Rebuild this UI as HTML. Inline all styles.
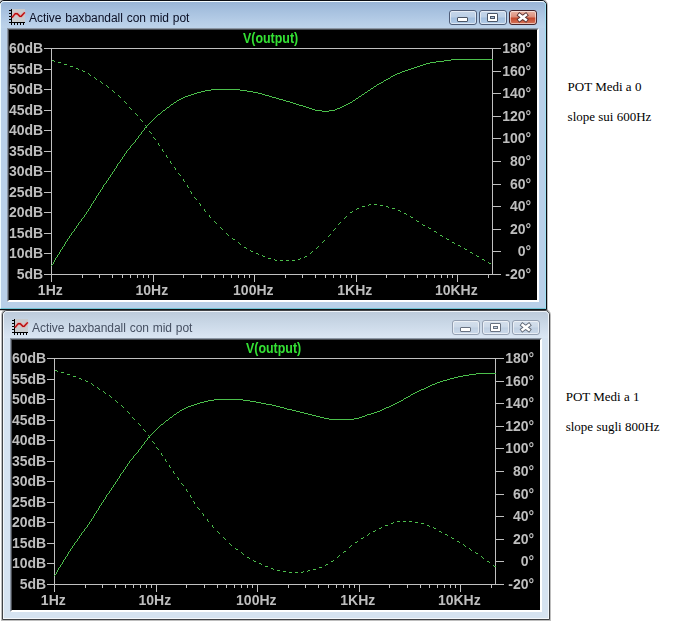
<!DOCTYPE html>
<html><head><meta charset="utf-8"><title>Active baxbandall con mid pot</title>
<style>
html,body{margin:0;padding:0;background:#fff;}
body{width:684px;height:621px;position:relative;overflow:hidden;font-family:"Liberation Serif","Times New Roman",serif;}
.win{position:absolute;width:548px;height:310px;box-sizing:border-box;border:1px solid #000;border-radius:5px 5px 0 0;overflow:hidden;}
.win.act{background:#b9d0e9;border-color:#0a0d12;box-shadow:0 0 0 1px rgba(40,40,40,.28);}
.win.ina{background:#d6e3f1;border-color:#404246;box-shadow:0 0 0 1px rgba(40,40,40,.3);}
.hl{position:absolute;left:0;top:0;right:0;bottom:0;box-sizing:border-box;border:1px solid #fff;border-radius:4px 4px 0 0;z-index:3;pointer-events:none}
.act .hl{border-color:#f4fcff #9fe0f2 #6fc3d4 #eefbff;}
.ina .hl{border-color:#f0f4f9 #f2f6fb #f4f7fb #f2f6fa;}
.cap{position:absolute;left:1px;top:1px;right:1px;height:26px;}
.act .cap{background:linear-gradient(#99b5d6 0,#a7c1df 35%,#b6cde7 75%,#bdd3ea 100%);}
.ina .cap{background:linear-gradient(#bdcbdb 0,#cad8e7 45%,#d6e2f0 85%,#dae6f3 100%);}
.ico{position:absolute;left:9px;top:8px;}
.ttl{will-change:transform;position:absolute;left:29px;top:9px;word-spacing:0.6px;height:16px;line-height:16px;font-family:"Liberation Sans",Arial,sans-serif;font-size:12px;white-space:nowrap;letter-spacing:-0.05px;}
.act .ttl{color:#0a0f24;}
.ina .ttl{color:#465062;}
.btn{position:absolute;top:9px;width:28px;height:15px;box-sizing:border-box;border:1px solid #4f5d78;border-radius:3px;overflow:hidden;}
.btn:before{content:"";position:absolute;left:0;top:0;right:0;bottom:0;border:1px solid rgba(255,255,255,.55);border-radius:2px;}
.bmin{left:449px}.bmax{left:479px}.bcls{left:509px}
.act .bmin,.act .bmax{background:linear-gradient(#c6d6ea 0,#bbcfe6 48%,#a3bfdf 52%,#b2cbe6 100%);}
.ina .btn{border-color:#94a0b2;background:linear-gradient(#d4dfec 0,#ccd9e8 48%,#bfcfe2 52%,#cbd9e9 100%);}
.act .bcls{border-color:#43232b;background:linear-gradient(#e9b5a6 0,#dc8e7b 46%,#c4472b 54%,#d4755c 100%);}
.btn i{position:absolute;box-sizing:border-box;background:#fff;border:1px solid #4b5566;border-radius:1px;}
.bmin i{left:7px;top:6px;width:11px;height:5px;}
.bmax i{left:7px;top:2px;width:11px;height:9px;border-width:1px;box-shadow:inset 0 0 0 2px #fff, inset 0 0 0 3px #4b5566;background:#b0c4dc}
.ina .btn i{border-color:#697281;}
.ina .bmax i{box-shadow:inset 0 0 0 2px #fff, inset 0 0 0 3px #697281;background:#ccd9e8}
.bcls svg{position:absolute;left:0;top:0}
.act .xo{stroke:#5a3232}.ina .xo{stroke:#5f6876}
.edge{position:absolute;left:7px;top:27px;width:528px;height:270px;border-style:solid;border-width:1px;border-color:#8c97a5 #fff #fff #8c97a5;}
.edge:before{content:"";position:absolute;left:0;top:0;right:0;bottom:0;border-style:solid;border-width:1px;border-color:#4a4e55 #fff #fff #4a4e55;}
.edge{padding:1px;}
.plot{display:block;background:#000;position:relative;will-change:transform;}
.note{position:absolute;font-size:13px;line-height:15px;color:#000;white-space:nowrap;}
</style></head><body>
<div class="win act" style="left:-1px;top:0px">
<div class="hl"></div>
<div class="cap"></div>
<svg class="ico" width="17" height="17" viewBox="0 0 17 17"><rect x="3" y="0" width="13" height="13" fill="#c9cbcd"/><path d="M2.5 0V16M0 13.5H16M0 1.5H2M0 4.5H2M0 7.5H2M0 10.5H2M5.5 14V16M8.5 14V16M11.5 14V16M14.5 14V16" stroke="#000" stroke-width="1" fill="none" shape-rendering="crispEdges"/><path d="M3 8.7L6.2 4.7H8.3L10.8 7.3H12.2L15.8 3.4" stroke="#ff7070" stroke-opacity=".45" stroke-width="2.8" fill="none" stroke-linejoin="round"/><path d="M3 8.7L6.2 4.7H8.3L10.8 7.3H12.2L15.8 3.4" stroke="#b80a0a" stroke-width="1.35" fill="none" stroke-linejoin="round"/></svg>
<div class="ttl">Active baxbandall con mid pot</div>
<div class="btn bmin"><i></i></div>
<div class="btn bmax"><i></i></div>
<div class="btn bcls"><svg width="26" height="13" viewBox="0 0 26 13"><path class="xo" d="M9.6 4L15.8 8.7M15.8 4L9.6 8.7" stroke-width="4.3" stroke-linecap="square"/><path d="M9.6 4L15.8 8.7M15.8 4L9.6 8.7" stroke="#fff" stroke-width="2.6" stroke-linecap="square"/></svg></div>
<div class="edge"><svg class="plot" width="528" height="270" viewBox="0 0 528 270">
<g stroke="#c0c0c0" stroke-width="1" fill="none" shape-rendering="crispEdges">
<path d="M34.5 18.5 H491.5 M34.5 244.5 H491.5 M42.5 18.5 V252.0 M483.5 18.5 V244.5"/>
<path d="M34.5 18.5 H42.5 M34.5 39.5 H42.5 M34.5 59.5 H42.5 M34.5 80.5 H42.5 M34.5 100.5 H42.5 M34.5 121.5 H42.5 M34.5 141.5 H42.5 M34.5 162.5 H42.5 M34.5 182.5 H42.5 M34.5 203.5 H42.5 M34.5 223.5 H42.5 M34.5 244.5 H42.5 M483.5 18.5 H491.5 M483.5 41.5 H491.5 M483.5 63.5 H491.5 M483.5 86.5 H491.5 M483.5 108.5 H491.5 M483.5 131.5 H491.5 M483.5 154.5 H491.5 M483.5 176.5 H491.5 M483.5 199.5 H491.5 M483.5 221.5 H491.5 M483.5 244.5 H491.5 M42.5 244.5 V252.0 M73.5 244.5 V248.0 M90.5 244.5 V248.0 M103.5 244.5 V248.0 M113.5 244.5 V248.0 M121.5 244.5 V248.0 M128.5 244.5 V248.0 M134.5 244.5 V248.0 M139.5 244.5 V248.0 M144.5 244.5 V252.0 M174.5 244.5 V248.0 M192.5 244.5 V248.0 M205.5 244.5 V248.0 M214.5 244.5 V248.0 M222.5 244.5 V248.0 M229.5 244.5 V248.0 M235.5 244.5 V248.0 M240.5 244.5 V248.0 M245.5 244.5 V252.0 M276.5 244.5 V248.0 M293.5 244.5 V248.0 M306.5 244.5 V248.0 M316.5 244.5 V248.0 M324.5 244.5 V248.0 M331.5 244.5 V248.0 M337.5 244.5 V248.0 M342.5 244.5 V248.0 M347.5 244.5 V252.0 M377.5 244.5 V248.0 M395.5 244.5 V248.0 M408.5 244.5 V248.0 M417.5 244.5 V248.0 M425.5 244.5 V248.0 M432.5 244.5 V248.0 M438.5 244.5 V248.0 M443.5 244.5 V248.0 M448.5 244.5 V252.0 M479.5 244.5 V248.0"/>
</g>
<g font-family="Liberation Sans, Arial, sans-serif" font-weight="bold" font-size="14px" fill="#bebebe">
<text x="34.1" y="23.0" text-anchor="end">60dB</text>
<text x="34.1" y="44.0" text-anchor="end">55dB</text>
<text x="34.1" y="64.0" text-anchor="end">50dB</text>
<text x="34.1" y="85.0" text-anchor="end">45dB</text>
<text x="34.1" y="105.0" text-anchor="end">40dB</text>
<text x="34.1" y="126.0" text-anchor="end">35dB</text>
<text x="34.1" y="146.0" text-anchor="end">30dB</text>
<text x="34.1" y="167.0" text-anchor="end">25dB</text>
<text x="34.1" y="187.0" text-anchor="end">20dB</text>
<text x="34.1" y="208.0" text-anchor="end">15dB</text>
<text x="34.1" y="228.0" text-anchor="end">10dB</text>
<text x="34.1" y="249.0" text-anchor="end">5dB</text>
<text x="522.1" y="23.0" text-anchor="end">180°</text>
<text x="522.1" y="46.0" text-anchor="end">160°</text>
<text x="522.1" y="68.0" text-anchor="end">140°</text>
<text x="522.1" y="91.0" text-anchor="end">120°</text>
<text x="522.1" y="113.0" text-anchor="end">100°</text>
<text x="522.1" y="136.0" text-anchor="end">80°</text>
<text x="522.1" y="159.0" text-anchor="end">60°</text>
<text x="522.1" y="181.0" text-anchor="end">40°</text>
<text x="522.1" y="204.0" text-anchor="end">20°</text>
<text x="522.1" y="226.0" text-anchor="end">0°</text>
<text x="522.1" y="249.0" text-anchor="end">-20°</text>
<text x="41.3" y="265.0" text-anchor="middle">1Hz</text>
<text x="142.8" y="265.0" text-anchor="middle">10Hz</text>
<text x="244.3" y="265.0" text-anchor="middle">100Hz</text>
<text x="345.8" y="265.0" text-anchor="middle">1KHz</text>
<text x="447.3" y="265.0" text-anchor="middle">10KHz</text>
</g>
<text x="261.6" y="12.600000000000001" text-anchor="middle" font-family="Liberation Sans, Arial, sans-serif" font-weight="bold" font-size="14px" fill="#34e034" textLength="55.3" lengthAdjust="spacingAndGlyphs">V(output)</text>
<path d="M442 29h42v1h-42zM435 30h7v1h-7zM427 31h8v1h-8zM421 32h6v1h-6zM417 33h4v1h-4zM414 34h3v1h-3zM411 35h3v1h-3zM408 36h3v1h-3zM405 37h3v1h-3zM402 38h3v1h-3zM399 39h3v1h-3zM396 40h3v1h-3zM393 41h3v1h-3zM391 42h2v1h-2zM388 43h3v1h-3zM386 44h2v1h-2zM384 45h2v1h-2zM382 46h2v1h-2zM381 47h1v1h-1zM379 48h2v1h-2zM377 49h2v1h-2zM375 50h2v1h-2zM374 51h1v1h-1zM372 52h2v1h-2zM370 53h2v1h-2zM368 54h2v1h-2zM367 55h1v1h-1zM365 56h2v1h-2zM364 57h1v1h-1zM362 58h2v1h-2zM202 59h29v1h-29zM361 59h1v1h-1zM196 60h6v1h-6zM231 60h7v1h-7zM359 60h2v1h-2zM192 61h4v1h-4zM238 61h6v1h-6zM358 61h1v1h-1zM188 62h4v1h-4zM244 62h5v1h-5zM356 62h2v1h-2zM185 63h3v1h-3zM249 63h4v1h-4zM355 63h1v1h-1zM182 64h3v1h-3zM253 64h3v1h-3zM353 64h2v1h-2zM179 65h3v1h-3zM256 65h4v1h-4zM352 65h1v1h-1zM176 66h3v1h-3zM260 66h3v1h-3zM350 66h2v1h-2zM174 67h2v1h-2zM263 67h4v1h-4zM349 67h1v1h-1zM172 68h2v1h-2zM267 68h3v1h-3zM347 68h2v1h-2zM170 69h2v1h-2zM270 69h4v1h-4zM346 69h1v1h-1zM168 70h2v1h-2zM274 70h3v1h-3zM344 70h2v1h-2zM167 71h1v1h-1zM277 71h4v1h-4zM343 71h1v1h-1zM165 72h2v1h-2zM281 72h3v1h-3zM341 72h2v1h-2zM164 73h1v1h-1zM284 73h3v1h-3zM339 73h2v1h-2zM162 74h2v1h-2zM287 74h3v1h-3zM337 74h2v1h-2zM161 75h1v1h-1zM290 75h4v1h-4zM335 75h2v1h-2zM160 76h1v1h-1zM294 76h3v1h-3zM333 76h2v1h-2zM158 77h2v1h-2zM297 77h3v1h-3zM331 77h2v1h-2zM157 78h1v1h-1zM300 78h3v1h-3zM328 78h3v1h-3zM156 79h1v1h-1zM303 79h3v1h-3zM326 79h2v1h-2zM154 80h2v1h-2zM306 80h7v1h-7zM320 80h6v1h-6zM153 81h1v1h-1zM313 81h7v1h-7zM152 82h1v1h-1zM151 83h1v1h-1zM149 84h2v1h-2zM148 85h1v1h-1zM147 86h1v1h-1zM146 87h1v1h-1zM145 88h1v1h-1zM144 89h1v1h-1zM143 90h1v1h-1zM142 91h1v1h-1zM141 92h1v1h-1zM140 93h1v1h-1zM139 94h1v1h-1zM138 95h1v1h-1zM137 96h1v1h-1zM136 97h1v1h-1zM135 98h1v1h-1zM135 99h1v1h-1zM134 100h1v1h-1zM133 101h1v1h-1zM132 102h1v1h-1zM132 103h1v1h-1zM131 104h1v1h-1zM130 105h1v1h-1zM129 106h1v1h-1zM129 107h1v1h-1zM128 108h1v1h-1zM127 109h1v1h-1zM126 110h1v1h-1zM126 111h1v1h-1zM125 112h1v1h-1zM124 113h1v1h-1zM123 114h1v1h-1zM122 115h1v1h-1zM121 116h1v1h-1zM121 117h1v1h-1zM120 118h1v1h-1zM119 119h1v1h-1zM118 120h1v1h-1zM117 121h1v1h-1zM117 122h1v1h-1zM116 123h1v1h-1zM115 124h1v1h-1zM115 125h1v1h-1zM114 126h1v1h-1zM113 127h1v1h-1zM113 128h1v1h-1zM112 129h1v1h-1zM111 130h1v1h-1zM111 131h1v1h-1zM110 132h1v1h-1zM109 133h1v1h-1zM108 134h1v1h-1zM108 135h1v1h-1zM107 136h1v1h-1zM107 137h1v1h-1zM106 138h1v1h-1zM105 139h1v1h-1zM105 140h1v1h-1zM104 141h1v1h-1zM103 142h1v1h-1zM103 143h1v1h-1zM102 144h1v1h-1zM101 145h1v1h-1zM101 146h1v1h-1zM100 147h1v1h-1zM99 148h1v1h-1zM99 149h1v1h-1zM98 150h1v1h-1zM97 151h1v1h-1zM97 152h1v1h-1zM96 153h1v1h-1zM95 154h1v1h-1zM94 155h1v1h-1zM94 156h1v1h-1zM93 157h1v1h-1zM93 158h1v1h-1zM92 159h1v1h-1zM91 160h1v1h-1zM91 161h1v1h-1zM90 162h1v1h-1zM89 163h1v1h-1zM89 164h1v1h-1zM88 165h1v1h-1zM87 166h1v1h-1zM87 167h1v1h-1zM86 168h1v1h-1zM86 169h1v1h-1zM85 170h1v1h-1zM84 171h1v1h-1zM84 172h1v1h-1zM83 173h1v1h-1zM82 174h1v1h-1zM82 175h1v1h-1zM81 176h1v1h-1zM81 177h1v1h-1zM80 178h1v1h-1zM79 179h1v1h-1zM79 180h1v1h-1zM78 181h1v1h-1zM77 182h1v1h-1zM77 183h1v1h-1zM76 184h1v1h-1zM75 185h1v1h-1zM75 186h1v1h-1zM74 187h1v1h-1zM73 188h1v1h-1zM72 189h1v1h-1zM72 190h1v1h-1zM71 191h1v1h-1zM70 192h1v1h-1zM69 193h1v1h-1zM69 194h1v1h-1zM68 195h1v1h-1zM67 196h1v1h-1zM67 197h1v1h-1zM66 198h1v1h-1zM65 199h1v1h-1zM65 200h1v1h-1zM64 201h1v1h-1zM63 202h1v1h-1zM62 203h1v1h-1zM62 204h1v1h-1zM61 205h1v1h-1zM60 206h1v1h-1zM60 207h1v1h-1zM59 208h1v1h-1zM58 209h1v1h-1zM58 210h1v1h-1zM57 211h1v1h-1zM56 212h1v1h-1zM56 213h1v1h-1zM55 214h1v1h-1zM55 215h1v1h-1zM54 216h1v1h-1zM53 217h1v1h-1zM53 218h1v1h-1zM52 219h1v1h-1zM51 220h1v1h-1zM51 221h1v1h-1zM50 222h1v1h-1zM50 223h1v1h-1zM49 224h1v1h-1zM48 225h1v1h-1zM48 226h1v1h-1zM47 227h1v1h-1zM46 228h1v1h-1zM46 229h1v1h-1zM45 230h1v1h-1zM45 231h1v1h-1zM44 232h1v1h-1zM44 233h1v1h-1zM43 234h1v1h-1zM42 235h1v1h-1z" fill="#4cc04c" shape-rendering="crispEdges"/>
<path d="M43 30h2v1h-2zM45 31h1v1h-1zM49 32h3v1h-3zM55 34h3v1h-3zM61 36h3v1h-3zM67 38h2v1h-2zM69 39h1v1h-1zM73 40h1v1h-1zM74 41h2v1h-2zM79 43h1v1h-1zM80 44h1v1h-1zM81 45h1v1h-1zM85 47h1v1h-1zM86 48h1v1h-1zM87 49h1v1h-1zM91 51h1v1h-1zM92 52h1v1h-1zM93 53h1v1h-1zM97 55h1v1h-1zM98 56h1v1h-1zM99 57h1v1h-1zM103 60h1v1h-1zM104 61h1v1h-1zM105 62h1v1h-1zM109 65h1v1h-1zM110 66h1v1h-1zM111 67h1v1h-1zM115 71h1v1h-1zM116 72h1v1h-1zM117 73h1v1h-1zM120 77h1v1h-1zM121 78h1v1h-1zM122 79h1v1h-1zM126 83h1v1h-1zM127 84h1v1h-1zM128 85h1v1h-1zM131 89h1v1h-1zM132 90h1v1h-1zM133 91h1v1h-1zM136 95h1v1h-1zM137 96h1v1h-1zM137 97h1v1h-1zM140 101h1v1h-1zM141 102h1v1h-1zM142 103h1v1h-1zM144 107h1v1h-1zM145 108h1v1h-1zM146 109h1v1h-1zM149 113h1v1h-1zM149 114h1v1h-1zM150 115h1v1h-1zM153 119h1v1h-1zM153 120h1v1h-1zM154 121h1v1h-1zM157 125h1v1h-1zM157 126h1v1h-1zM158 127h1v1h-1zM161 131h1v1h-1zM161 132h1v1h-1zM162 133h1v1h-1zM165 137h1v1h-1zM166 138h1v1h-1zM166 139h1v1h-1zM169 143h1v1h-1zM170 144h1v1h-1zM171 145h1v1h-1zM174 149h1v1h-1zM174 150h1v1h-1zM175 151h1v1h-1zM178 155h1v1h-1zM178 156h1v1h-1zM179 157h1v1h-1zM181 161h1v1h-1zM182 162h1v1h-1zM182 163h1v1h-1zM185 167h1v1h-1zM186 168h1v1h-1zM187 169h1v1h-1zM190 173h1v1h-1zM191 174h1v1h-1zM360 174h2v1h-2zM365 174h3v1h-3zM191 175h1v1h-1zM359 175h1v1h-1zM371 175h3v1h-3zM353 176h3v1h-3zM377 176h2v1h-2zM379 177h1v1h-1zM348 178h2v1h-2zM383 178h3v1h-3zM195 179h1v1h-1zM347 179h1v1h-1zM195 180h1v1h-1zM389 180h2v1h-2zM196 181h1v1h-1zM343 181h1v1h-1zM391 181h1v1h-1zM341 182h2v1h-2zM395 183h2v1h-2zM397 184h1v1h-1zM200 185h1v1h-1zM200 186h1v1h-1zM337 186h1v1h-1zM401 186h1v1h-1zM201 187h1v1h-1zM336 187h1v1h-1zM402 187h2v1h-2zM335 188h1v1h-1zM407 190h1v1h-1zM205 191h1v1h-1zM408 191h2v1h-2zM206 192h1v1h-1zM331 192h1v1h-1zM207 193h1v1h-1zM330 193h1v1h-1zM329 194h1v1h-1zM413 194h1v1h-1zM414 195h2v1h-2zM211 197h1v1h-1zM419 197h1v1h-1zM212 198h1v1h-1zM326 198h1v1h-1zM420 198h2v1h-2zM213 199h1v1h-1zM325 199h1v1h-1zM324 200h1v1h-1zM425 201h2v1h-2zM427 202h1v1h-1zM217 203h1v1h-1zM218 204h1v1h-1zM321 204h1v1h-1zM219 205h1v1h-1zM320 205h1v1h-1zM431 205h2v1h-2zM319 206h1v1h-1zM433 206h1v1h-1zM223 208h1v1h-1zM437 208h1v1h-1zM224 209h2v1h-2zM438 209h2v1h-2zM315 210h1v1h-1zM314 211h1v1h-1zM229 212h1v1h-1zM313 212h1v1h-1zM443 212h2v1h-2zM230 213h1v1h-1zM445 213h1v1h-1zM231 214h1v1h-1zM449 215h2v1h-2zM309 216h1v1h-1zM451 216h1v1h-1zM235 217h2v1h-2zM308 217h1v1h-1zM237 218h1v1h-1zM307 218h1v1h-1zM455 218h1v1h-1zM456 219h2v1h-2zM241 220h1v1h-1zM242 221h2v1h-2zM303 221h1v1h-1zM302 222h1v1h-1zM461 222h2v1h-2zM247 223h2v1h-2zM301 223h1v1h-1zM463 223h1v1h-1zM249 224h1v1h-1zM253 225h1v1h-1zM467 225h1v1h-1zM254 226h2v1h-2zM296 226h2v1h-2zM468 226h2v1h-2zM295 227h1v1h-1zM259 228h3v1h-3zM291 228h1v1h-1zM265 229h1v1h-1zM289 229h2v1h-2zM473 229h2v1h-2zM266 230h2v1h-2zM271 230h3v1h-3zM277 230h3v1h-3zM283 230h3v1h-3zM475 230h1v1h-1zM479 232h1v1h-1zM480 233h2v1h-2z" fill="#4cc04c" shape-rendering="crispEdges"/>
</svg></div>
</div>
<div class="win ina" style="left:2px;top:310px">
<div class="hl"></div>
<div class="cap"></div>
<svg class="ico" width="17" height="17" viewBox="0 0 17 17"><rect x="3" y="0" width="13" height="13" fill="#c9cbcd"/><path d="M2.5 0V16M0 13.5H16M0 1.5H2M0 4.5H2M0 7.5H2M0 10.5H2M5.5 14V16M8.5 14V16M11.5 14V16M14.5 14V16" stroke="#000" stroke-width="1" fill="none" shape-rendering="crispEdges"/><path d="M3 8.7L6.2 4.7H8.3L10.8 7.3H12.2L15.8 3.4" stroke="#ff7070" stroke-opacity=".45" stroke-width="2.8" fill="none" stroke-linejoin="round"/><path d="M3 8.7L6.2 4.7H8.3L10.8 7.3H12.2L15.8 3.4" stroke="#b80a0a" stroke-width="1.35" fill="none" stroke-linejoin="round"/></svg>
<div class="ttl">Active baxbandall con mid pot</div>
<div class="btn bmin"><i></i></div>
<div class="btn bmax"><i></i></div>
<div class="btn bcls"><svg width="26" height="13" viewBox="0 0 26 13"><path class="xo" d="M9.6 4L15.8 8.7M15.8 4L9.6 8.7" stroke-width="4.3" stroke-linecap="square"/><path d="M9.6 4L15.8 8.7M15.8 4L9.6 8.7" stroke="#fff" stroke-width="2.6" stroke-linecap="square"/></svg></div>
<div class="edge"><svg class="plot" width="528" height="270" viewBox="0 0 528 270">
<g stroke="#c0c0c0" stroke-width="1" fill="none" shape-rendering="crispEdges">
<path d="M34.5 18.5 H491.5 M34.5 244.5 H491.5 M42.5 18.5 V252.0 M483.5 18.5 V244.5"/>
<path d="M34.5 18.5 H42.5 M34.5 39.5 H42.5 M34.5 59.5 H42.5 M34.5 80.5 H42.5 M34.5 100.5 H42.5 M34.5 121.5 H42.5 M34.5 141.5 H42.5 M34.5 162.5 H42.5 M34.5 182.5 H42.5 M34.5 203.5 H42.5 M34.5 223.5 H42.5 M34.5 244.5 H42.5 M483.5 18.5 H491.5 M483.5 41.5 H491.5 M483.5 63.5 H491.5 M483.5 86.5 H491.5 M483.5 108.5 H491.5 M483.5 131.5 H491.5 M483.5 154.5 H491.5 M483.5 176.5 H491.5 M483.5 199.5 H491.5 M483.5 221.5 H491.5 M483.5 244.5 H491.5 M42.5 244.5 V252.0 M73.5 244.5 V248.0 M90.5 244.5 V248.0 M103.5 244.5 V248.0 M113.5 244.5 V248.0 M121.5 244.5 V248.0 M128.5 244.5 V248.0 M134.5 244.5 V248.0 M139.5 244.5 V248.0 M144.5 244.5 V252.0 M174.5 244.5 V248.0 M192.5 244.5 V248.0 M205.5 244.5 V248.0 M214.5 244.5 V248.0 M222.5 244.5 V248.0 M229.5 244.5 V248.0 M235.5 244.5 V248.0 M240.5 244.5 V248.0 M245.5 244.5 V252.0 M276.5 244.5 V248.0 M293.5 244.5 V248.0 M306.5 244.5 V248.0 M316.5 244.5 V248.0 M324.5 244.5 V248.0 M331.5 244.5 V248.0 M337.5 244.5 V248.0 M342.5 244.5 V248.0 M347.5 244.5 V252.0 M377.5 244.5 V248.0 M395.5 244.5 V248.0 M408.5 244.5 V248.0 M417.5 244.5 V248.0 M425.5 244.5 V248.0 M432.5 244.5 V248.0 M438.5 244.5 V248.0 M443.5 244.5 V248.0 M448.5 244.5 V252.0 M479.5 244.5 V248.0"/>
</g>
<g font-family="Liberation Sans, Arial, sans-serif" font-weight="bold" font-size="14px" fill="#bebebe">
<text x="34.1" y="23.0" text-anchor="end">60dB</text>
<text x="34.1" y="44.0" text-anchor="end">55dB</text>
<text x="34.1" y="64.0" text-anchor="end">50dB</text>
<text x="34.1" y="85.0" text-anchor="end">45dB</text>
<text x="34.1" y="105.0" text-anchor="end">40dB</text>
<text x="34.1" y="126.0" text-anchor="end">35dB</text>
<text x="34.1" y="146.0" text-anchor="end">30dB</text>
<text x="34.1" y="167.0" text-anchor="end">25dB</text>
<text x="34.1" y="187.0" text-anchor="end">20dB</text>
<text x="34.1" y="208.0" text-anchor="end">15dB</text>
<text x="34.1" y="228.0" text-anchor="end">10dB</text>
<text x="34.1" y="249.0" text-anchor="end">5dB</text>
<text x="522.1" y="23.0" text-anchor="end">180°</text>
<text x="522.1" y="46.0" text-anchor="end">160°</text>
<text x="522.1" y="68.0" text-anchor="end">140°</text>
<text x="522.1" y="91.0" text-anchor="end">120°</text>
<text x="522.1" y="113.0" text-anchor="end">100°</text>
<text x="522.1" y="136.0" text-anchor="end">80°</text>
<text x="522.1" y="159.0" text-anchor="end">60°</text>
<text x="522.1" y="181.0" text-anchor="end">40°</text>
<text x="522.1" y="204.0" text-anchor="end">20°</text>
<text x="522.1" y="226.0" text-anchor="end">0°</text>
<text x="522.1" y="249.0" text-anchor="end">-20°</text>
<text x="41.3" y="265.0" text-anchor="middle">1Hz</text>
<text x="142.8" y="265.0" text-anchor="middle">10Hz</text>
<text x="244.3" y="265.0" text-anchor="middle">100Hz</text>
<text x="345.8" y="265.0" text-anchor="middle">1KHz</text>
<text x="447.3" y="265.0" text-anchor="middle">10KHz</text>
</g>
<text x="261.6" y="12.600000000000001" text-anchor="middle" font-family="Liberation Sans, Arial, sans-serif" font-weight="bold" font-size="14px" fill="#34e034" textLength="55.3" lengthAdjust="spacingAndGlyphs">V(output)</text>
<path d="M464 33h20v1h-20zM457 34h7v1h-7zM451 35h6v1h-6zM446 36h5v1h-5zM442 37h4v1h-4zM438 38h4v1h-4zM435 39h3v1h-3zM431 40h4v1h-4zM428 41h3v1h-3zM425 42h3v1h-3zM423 43h2v1h-2zM420 44h3v1h-3zM418 45h2v1h-2zM416 46h2v1h-2zM414 47h2v1h-2zM412 48h2v1h-2zM409 49h3v1h-3zM407 50h2v1h-2zM405 51h2v1h-2zM403 52h2v1h-2zM401 53h2v1h-2zM399 54h2v1h-2zM398 55h1v1h-1zM396 56h2v1h-2zM394 57h2v1h-2zM392 58h2v1h-2zM202 59h29v1h-29zM391 59h1v1h-1zM196 60h6v1h-6zM231 60h7v1h-7zM389 60h2v1h-2zM192 61h4v1h-4zM238 61h6v1h-6zM387 61h2v1h-2zM188 62h4v1h-4zM244 62h5v1h-5zM385 62h2v1h-2zM185 63h3v1h-3zM249 63h5v1h-5zM383 63h2v1h-2zM182 64h3v1h-3zM254 64h6v1h-6zM381 64h2v1h-2zM179 65h3v1h-3zM260 65h4v1h-4zM379 65h2v1h-2zM176 66h3v1h-3zM264 66h4v1h-4zM377 66h2v1h-2zM174 67h2v1h-2zM268 67h4v1h-4zM374 67h3v1h-3zM172 68h2v1h-2zM272 68h3v1h-3zM372 68h2v1h-2zM170 69h2v1h-2zM275 69h5v1h-5zM370 69h2v1h-2zM168 70h2v1h-2zM280 70h4v1h-4zM368 70h2v1h-2zM167 71h1v1h-1zM284 71h4v1h-4zM365 71h3v1h-3zM165 72h2v1h-2zM288 72h4v1h-4zM362 72h3v1h-3zM164 73h1v1h-1zM292 73h4v1h-4zM359 73h3v1h-3zM162 74h2v1h-2zM296 74h4v1h-4zM355 74h4v1h-4zM161 75h1v1h-1zM300 75h4v1h-4zM353 75h2v1h-2zM160 76h1v1h-1zM304 76h4v1h-4zM350 76h3v1h-3zM158 77h2v1h-2zM308 77h4v1h-4zM347 77h3v1h-3zM157 78h1v1h-1zM312 78h5v1h-5zM342 78h5v1h-5zM156 79h1v1h-1zM317 79h25v1h-25zM154 80h2v1h-2zM153 81h1v1h-1zM152 82h1v1h-1zM151 83h1v1h-1zM149 84h2v1h-2zM148 85h1v1h-1zM147 86h1v1h-1zM146 87h1v1h-1zM145 88h1v1h-1zM144 89h1v1h-1zM143 90h1v1h-1zM142 91h1v1h-1zM141 92h1v1h-1zM140 93h1v1h-1zM139 94h1v1h-1zM138 95h1v1h-1zM137 96h1v1h-1zM136 97h1v1h-1zM135 98h1v1h-1zM135 99h1v1h-1zM134 100h1v1h-1zM133 101h1v1h-1zM132 102h1v1h-1zM132 103h1v1h-1zM131 104h1v1h-1zM130 105h1v1h-1zM129 106h1v1h-1zM129 107h1v1h-1zM128 108h1v1h-1zM127 109h1v1h-1zM126 110h1v1h-1zM126 111h1v1h-1zM125 112h1v1h-1zM124 113h1v1h-1zM123 114h1v1h-1zM122 115h1v1h-1zM121 116h1v1h-1zM121 117h1v1h-1zM120 118h1v1h-1zM119 119h1v1h-1zM118 120h1v1h-1zM117 121h1v1h-1zM117 122h1v1h-1zM116 123h1v1h-1zM115 124h1v1h-1zM115 125h1v1h-1zM114 126h1v1h-1zM113 127h1v1h-1zM113 128h1v1h-1zM112 129h1v1h-1zM111 130h1v1h-1zM111 131h1v1h-1zM110 132h1v1h-1zM109 133h1v1h-1zM108 134h1v1h-1zM108 135h1v1h-1zM107 136h1v1h-1zM107 137h1v1h-1zM106 138h1v1h-1zM105 139h1v1h-1zM105 140h1v1h-1zM104 141h1v1h-1zM103 142h1v1h-1zM103 143h1v1h-1zM102 144h1v1h-1zM101 145h1v1h-1zM101 146h1v1h-1zM100 147h1v1h-1zM99 148h1v1h-1zM99 149h1v1h-1zM98 150h1v1h-1zM97 151h1v1h-1zM97 152h1v1h-1zM96 153h1v1h-1zM95 154h1v1h-1zM94 155h1v1h-1zM94 156h1v1h-1zM93 157h1v1h-1zM93 158h1v1h-1zM92 159h1v1h-1zM91 160h1v1h-1zM91 161h1v1h-1zM90 162h1v1h-1zM89 163h1v1h-1zM89 164h1v1h-1zM88 165h1v1h-1zM87 166h1v1h-1zM87 167h1v1h-1zM86 168h1v1h-1zM86 169h1v1h-1zM85 170h1v1h-1zM84 171h1v1h-1zM84 172h1v1h-1zM83 173h1v1h-1zM82 174h1v1h-1zM82 175h1v1h-1zM81 176h1v1h-1zM81 177h1v1h-1zM80 178h1v1h-1zM79 179h1v1h-1zM79 180h1v1h-1zM78 181h1v1h-1zM77 182h1v1h-1zM77 183h1v1h-1zM76 184h1v1h-1zM75 185h1v1h-1zM75 186h1v1h-1zM74 187h1v1h-1zM73 188h1v1h-1zM72 189h1v1h-1zM72 190h1v1h-1zM71 191h1v1h-1zM70 192h1v1h-1zM69 193h1v1h-1zM69 194h1v1h-1zM68 195h1v1h-1zM67 196h1v1h-1zM67 197h1v1h-1zM66 198h1v1h-1zM65 199h1v1h-1zM65 200h1v1h-1zM64 201h1v1h-1zM63 202h1v1h-1zM62 203h1v1h-1zM62 204h1v1h-1zM61 205h1v1h-1zM60 206h1v1h-1zM60 207h1v1h-1zM59 208h1v1h-1zM58 209h1v1h-1zM58 210h1v1h-1zM57 211h1v1h-1zM56 212h1v1h-1zM56 213h1v1h-1zM55 214h1v1h-1zM55 215h1v1h-1zM54 216h1v1h-1zM53 217h1v1h-1zM53 218h1v1h-1zM52 219h1v1h-1zM51 220h1v1h-1zM51 221h1v1h-1zM50 222h1v1h-1zM50 223h1v1h-1zM49 224h1v1h-1zM48 225h1v1h-1zM48 226h1v1h-1zM47 227h1v1h-1zM46 228h1v1h-1zM46 229h1v1h-1zM45 230h1v1h-1zM45 231h1v1h-1zM44 232h1v1h-1zM44 233h1v1h-1zM43 234h1v1h-1zM42 235h1v1h-1z" fill="#4cc04c" shape-rendering="crispEdges"/>
<path d="M43 30h2v1h-2zM45 31h1v1h-1zM49 32h3v1h-3zM55 34h3v1h-3zM61 36h3v1h-3zM67 38h2v1h-2zM69 39h1v1h-1zM73 40h1v1h-1zM74 41h2v1h-2zM79 43h1v1h-1zM80 44h1v1h-1zM81 45h1v1h-1zM85 47h1v1h-1zM86 48h1v1h-1zM87 49h1v1h-1zM91 51h1v1h-1zM92 52h1v1h-1zM93 53h1v1h-1zM97 55h1v1h-1zM98 56h1v1h-1zM99 57h1v1h-1zM103 60h1v1h-1zM104 61h1v1h-1zM105 62h1v1h-1zM109 65h1v1h-1zM110 66h1v1h-1zM111 67h1v1h-1zM115 71h1v1h-1zM116 72h1v1h-1zM117 73h1v1h-1zM120 77h1v1h-1zM121 78h1v1h-1zM122 79h1v1h-1zM126 83h1v1h-1zM127 84h1v1h-1zM128 85h1v1h-1zM131 89h1v1h-1zM132 90h1v1h-1zM133 91h1v1h-1zM136 95h1v1h-1zM137 96h1v1h-1zM137 97h1v1h-1zM140 101h1v1h-1zM141 102h1v1h-1zM142 103h1v1h-1zM144 107h1v1h-1zM145 108h1v1h-1zM146 109h1v1h-1zM149 113h1v1h-1zM149 114h1v1h-1zM150 115h1v1h-1zM153 119h1v1h-1zM153 120h1v1h-1zM154 121h1v1h-1zM157 125h1v1h-1zM157 126h1v1h-1zM158 127h1v1h-1zM161 131h1v1h-1zM161 132h1v1h-1zM162 133h1v1h-1zM165 137h1v1h-1zM166 138h1v1h-1zM166 139h1v1h-1zM169 143h1v1h-1zM170 144h1v1h-1zM171 145h1v1h-1zM174 149h1v1h-1zM174 150h1v1h-1zM175 151h1v1h-1zM178 155h1v1h-1zM178 156h1v1h-1zM179 157h1v1h-1zM181 161h1v1h-1zM182 162h1v1h-1zM182 163h1v1h-1zM185 167h1v1h-1zM186 168h1v1h-1zM187 169h1v1h-1zM190 173h1v1h-1zM191 174h1v1h-1zM191 175h1v1h-1zM195 179h1v1h-1zM195 180h1v1h-1zM196 181h1v1h-1zM385 181h3v1h-3zM391 181h3v1h-3zM397 181h3v1h-3zM381 182h1v1h-1zM403 182h3v1h-3zM379 183h2v1h-2zM409 183h3v1h-3zM200 185h1v1h-1zM373 185h3v1h-3zM415 185h2v1h-2zM200 186h1v1h-1zM417 186h1v1h-1zM201 187h1v1h-1zM369 187h1v1h-1zM421 187h1v1h-1zM367 188h2v1h-2zM422 188h2v1h-2zM363 190h1v1h-1zM205 191h1v1h-1zM361 191h2v1h-2zM427 191h2v1h-2zM206 192h1v1h-1zM429 192h1v1h-1zM207 193h1v1h-1zM357 193h1v1h-1zM356 194h1v1h-1zM433 194h2v1h-2zM355 195h1v1h-1zM435 195h1v1h-1zM211 197h1v1h-1zM351 197h1v1h-1zM439 197h1v1h-1zM212 198h1v1h-1zM349 198h2v1h-2zM440 198h2v1h-2zM213 199h1v1h-1zM345 201h1v1h-1zM445 201h2v1h-2zM343 202h2v1h-2zM447 202h1v1h-1zM217 203h1v1h-1zM218 204h1v1h-1zM451 204h1v1h-1zM219 205h1v1h-1zM339 205h1v1h-1zM452 205h1v1h-1zM338 206h1v1h-1zM453 206h1v1h-1zM337 207h1v1h-1zM223 208h1v1h-1zM457 208h1v1h-1zM224 209h2v1h-2zM458 209h1v1h-1zM459 210h1v1h-1zM332 211h2v1h-2zM229 212h1v1h-1zM331 212h1v1h-1zM463 212h1v1h-1zM230 213h1v1h-1zM464 213h2v1h-2zM231 214h1v1h-1zM327 215h1v1h-1zM326 216h1v1h-1zM469 216h1v1h-1zM235 217h2v1h-2zM325 217h1v1h-1zM470 217h1v1h-1zM237 218h1v1h-1zM471 218h1v1h-1zM241 220h1v1h-1zM321 220h1v1h-1zM242 221h2v1h-2zM319 221h2v1h-2zM475 221h2v1h-2zM477 222h1v1h-1zM247 223h2v1h-2zM249 224h1v1h-1zM314 224h2v1h-2zM313 225h1v1h-1zM481 225h1v1h-1zM253 226h3v1h-3zM482 226h2v1h-2zM307 227h3v1h-3zM259 228h2v1h-2zM261 229h1v1h-1zM301 229h3v1h-3zM265 230h3v1h-3zM296 230h2v1h-2zM271 231h3v1h-3zM291 231h1v1h-1zM295 231h1v1h-1zM277 232h3v1h-3zM283 232h3v1h-3zM289 232h2v1h-2z" fill="#4cc04c" shape-rendering="crispEdges"/>
</svg></div>
</div>
<div class="note" style="left:567.6px;top:79px">POT Medi a 0</div>
<div class="note" style="left:567.6px;top:109px">slope sui 600Hz</div>
<div class="note" style="left:565.7px;top:389px">POT Medi a 1</div>
<div class="note" style="left:565.7px;top:419px">slope sugli 800Hz</div>
</body></html>
